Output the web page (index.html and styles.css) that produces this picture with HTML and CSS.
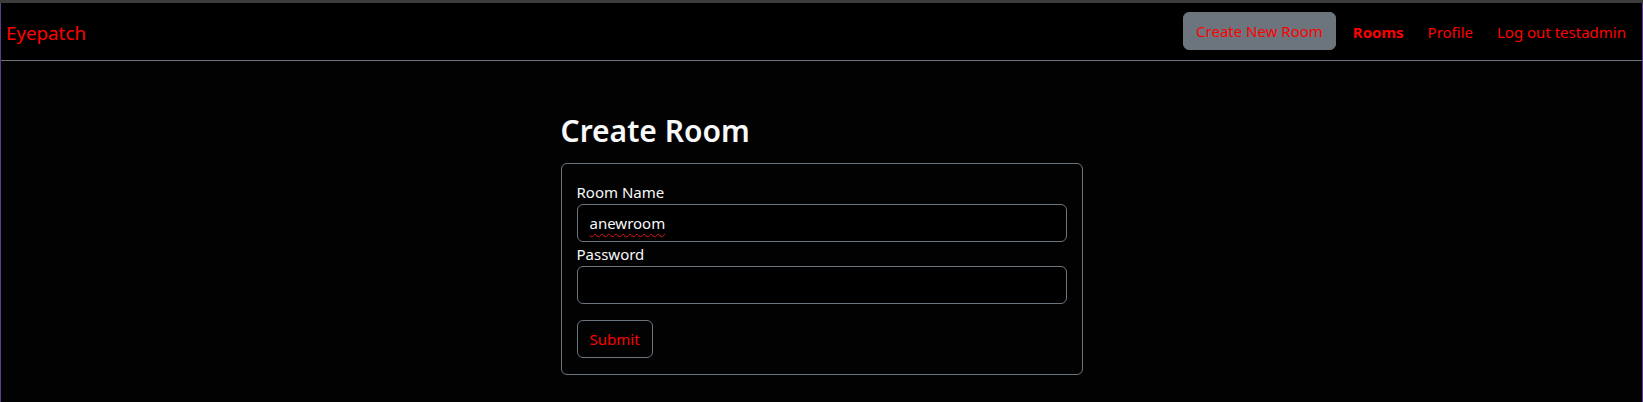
FILE: index.html
```html
<!DOCTYPE html>
<html lang="en">
<head>
<meta charset="utf-8">
<title>Eyepatch - Create Room</title>
<link rel="stylesheet" href="styles.css">
</head>
<body>
<div class="topbar"></div>
<div class="frame">
  <nav class="navbar">
    <a class="brand" href="#">Eyepatch</a>
    <div class="nav-links">
      <a class="btn-create" href="#">Create New Room</a>
      <a class="nav-link active" href="#">Rooms</a>
      <a class="nav-link" href="#">Profile</a>
      <a class="nav-link" href="#">Log out testadmin</a>
    </div>
  </nav>
  <main class="main">
    <section class="panel">
      <h2 class="title">Create Room</h2>
      <form class="card">
        <label class="label" for="room">Room Name</label>
        <div class="field-wrap">
          <input class="field" id="room" type="text" value="anewroom">
          <span class="spell" aria-hidden="true">anewroom</span>
        </div>
        <label class="label" for="pw">Password</label>
        <input class="field" id="pw" type="password">
        <button class="btn-submit" type="button">Submit</button>
      </form>
    </section>
  </main>
</div>
</body>
</html>
```
FILE: styles.css
```css
html, body {
  margin: 0;
  padding: 0;
  height: 100%;
}
body {
  background: #000;
  font-family: "Noto Sans", "Open Sans", sans-serif;
  font-size: 15px;
  line-height: 24px;
  color: #f8f9fa;
  display: flex;
  flex-direction: column;
}
.topbar {
  height: 3px;
  background: #3c3c3c;
  flex: none;
}
.frame {
  flex: 1;
  border-left: 1px solid #5b3d8c;
  border-right: 1px solid #5b3d8c;
  background: #020202;
}
.navbar {
  display: flex;
  align-items: center;
  justify-content: space-between;
  padding: 9px 16px 10px 5px;
  border-bottom: 1px solid #6f757d;
  background: #000;
}
.brand {
  color: #ff0000;
  font-size: 18.75px;
  text-decoration: none;
  line-height: 30px;
  padding-top: 3px;
}
.nav-links {
  display: flex;
  align-items: center;
  gap: 24px;
}
.nav-link {
  color: #ff0000;
  text-decoration: none;
  padding-top: 1px;
}
.nav-link.active {
  font-weight: 700;
}
.btn-create {
  display: block;
  background: #6c757d;
  color: #ff0000;
  text-decoration: none;
  border: 1px solid #6c757d;
  border-radius: 6px;
  padding: 6px 12px;
  line-height: 24px;
  white-space: nowrap;
  margin-right: -7px;
}
.panel {
  width: 522px;
  margin: 0 auto;
  padding-top: 52px;
}
.title {
  margin: 0 0 14px 0;
  font-size: 30px;
  font-weight: 600;
  line-height: 36px;
  color: #f8f9fa;
}
.card {
  display: flex;
  flex-direction: column;
  align-items: flex-start;
  border: 1px solid #6c757d;
  border-radius: 6px;
  padding: 16px 15px;
}
.label {
  line-height: 24px;
  color: #f8f9fa;
}
.field-wrap {
  position: relative;
  width: 100%;
}
.field {
  display: block;
  box-sizing: border-box;
  width: 100%;
  height: 38px;
  background: #000;
  border: 1px solid #6c757d;
  border-radius: 6px;
  padding: 6px 12px;
  font: inherit;
  color: #f8f9fa;
  outline: none;
}
.spell {
  position: absolute;
  left: 13px;
  top: 7px;
  line-height: 24px;
  color: transparent;
  pointer-events: none;
  text-decoration: underline wavy #e0141e;
  text-decoration-thickness: 1px;
  text-underline-offset: 4px;
}
.btn-submit {
  margin-top: 16px;
  height: 38px;
  padding: 6px 12px;
  background: transparent;
  border: 1px solid #6c757d;
  border-radius: 6px;
  color: #ff0000;
  font: inherit;
  line-height: 24px;
}
```
